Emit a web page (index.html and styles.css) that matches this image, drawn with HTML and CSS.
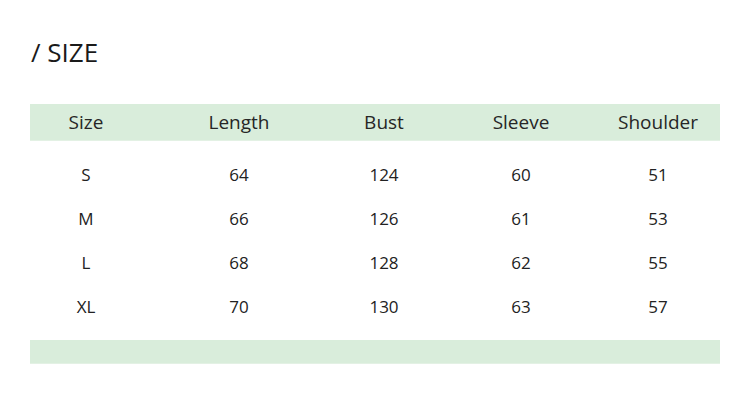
FILE: index.html
```html
<!DOCTYPE html>
<html>
<head>
<meta charset="utf-8">
<link rel="stylesheet" href="styles.css">
</head>
<body>
<div class="page">
  <h1 class="title">/ SIZE</h1>
  <div class="table">
    <div class="row head">
      <div>Size</div><div>Length</div><div>Bust</div><div>Sleeve</div><div>Shoulder</div>
    </div>
    <div class="body">
      <div class="row"><div>S</div><div>64</div><div>124</div><div>60</div><div>51</div></div>
      <div class="row"><div>M</div><div>66</div><div>126</div><div>61</div><div>53</div></div>
      <div class="row"><div>L</div><div>68</div><div>128</div><div>62</div><div>55</div></div>
      <div class="row"><div>XL</div><div>70</div><div>130</div><div>63</div><div>57</div></div>
    </div>
    <div class="foot"></div>
  </div>
</div>
</body>
</html>
```
FILE: styles.css
```css
html, body {
  margin: 0;
  padding: 0;
  background: #ffffff;
}
.page {
  padding: 34px 30px 0 30px;
  font-family: "Open Sans", "Noto Sans", sans-serif;
  color: #222222;
}
.title {
  margin: 0 0 0 1px;
  font-weight: 400;
  font-size: 26px;
  line-height: 36px;
  color: #1a1a1a;
}
.table {
  margin-top: 34px;
  width: 690px;
}
.row {
  display: grid;
  grid-template-columns: 112px 194px 96px 178px 96px;
  text-align: center;
  align-items: center;
}
.head {
  background: #d9eddb;
  height: 37px;
  font-size: 19px;
  color: #262626;
  border-bottom: 1px solid #e3f1e4;
  box-sizing: border-box;
}
.body {
  padding: 11px 0 12px;
}
.body .row {
  height: 44px;
  font-size: 17px;
}
.foot {
  height: 24px;
  background: #d9eddb;
  border-bottom: 1px solid #e3f1e4;
  box-sizing: border-box;
}
```
